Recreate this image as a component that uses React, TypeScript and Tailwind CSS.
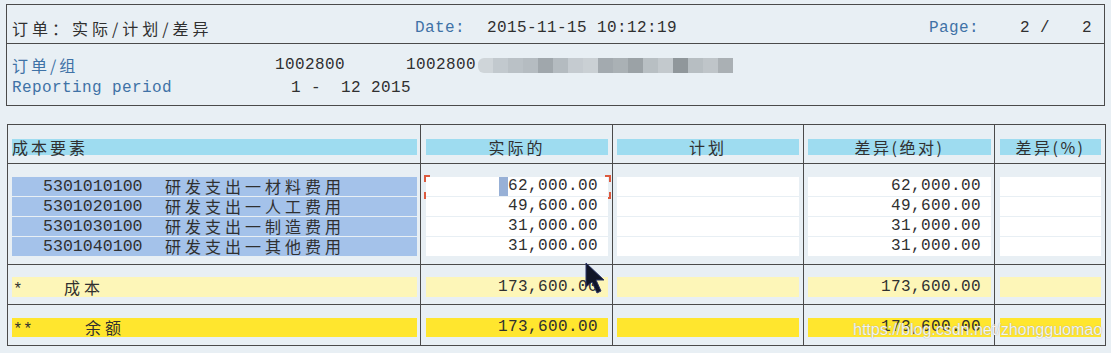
import React from "react";

const mono = "font-['Liberation_Mono','Noto_Sans_CJK_SC',monospace] tracking-[0.4px]";
const cjk = "font-['Noto_Sans_CJK_SC','Liberation_Sans',sans-serif]";

const cols = [
  "w-[413px] pl-[4px] pr-[3px] border-r border-[#4a4a4a]",
  "w-[192px] pl-[5px] pr-[4px] border-r border-[#4a4a4a]",
  "w-[191px] pl-[4px] pr-[4px] border-r border-[#4a4a4a]",
  "w-[191px] pl-[4px] pr-[3px] border-r border-[#4a4a4a]",
  "w-[110px] pl-[5px] pr-[4px]",
];

const blur = [
  "bg-[#cfd5d9]",
  "bg-[#c2c9ce]",
  "bg-[#bac1c6]",
  "bg-[#b5bcc1]",
  "bg-[#a0a7ac]",
  "bg-[#b4bbc0]",
  "bg-[#c5cbd0]",
  "bg-[#cad0d4]",
  "bg-[#a3aaaf]",
  "bg-[#aab1b5]",
  "bg-[#9ba2a6]",
  "bg-[#b8bfc3]",
  "bg-[#c3c9cd]",
  "bg-[#90979b]",
  "bg-[#b7bec2]",
  "bg-[#bfc5c9]",
  "bg-[#aab0b4]",
];

const rows = [
  { code: "5301010100", name: "研发支出一材料费用", val: "62,000.00" },
  { code: "5301020100", name: "研发支出一人工费用", val: "49,600.00" },
  { code: "5301030100", name: "研发支出一制造费用", val: "31,000.00" },
  { code: "5301040100", name: "研发支出一其他费用", val: "31,000.00" },
];

function Corner({ pos }: { pos: string }) {
  return <div className={`absolute w-[6px] h-[7px] border-[#dc5a3e] ${pos}`} />;
}

export default function App() {
  return (
    <div className="relative w-[1111px] h-[353px] overflow-hidden bg-[#e8eff4] pt-[4px] text-[#303030] text-[16px]">
      {/* top box */}
      <div className="ml-[6px] w-[1099px] border border-[#4a4a4a]">
        <div className="flex h-[39px] items-start pt-[13px] border-b border-[#4a4a4a] leading-[20px]">
          <span className={`w-[408px] pl-[5px] ${cjk} tracking-[4px]`}>订单：实际/计划/差异</span>
          <span className={`w-[72px] ${mono} text-[#3f72a6]`}>Date:</span>
          <span className={`w-[442px] ${mono}`}>2015-11-15 10:12:19</span>
          <span className={`w-[91px] ${mono} text-[#3f72a6]`}>Page:</span>
          <span className={`w-[62px] ${mono} whitespace-pre`}>2 /</span>
          <span className={`${mono}`}>2</span>
        </div>
        <div className="h-[61px] pt-[11px] leading-[20px]">
          <div className="flex items-center h-[20px]">
            <span className={`w-[268px] pl-[5px] ${cjk} tracking-[3px] text-[#3f72a6]`}>订单/组</span>
            <span className={`w-[131px] ${mono}`}>1002800</span>
            <span className={`w-[72px] ${mono}`}>1002800</span>
            <div className="flex h-[15px] rounded-l-[6px] overflow-hidden">
              {blur.map((c, i) => (
                <div key={i} className={`w-[15px] h-[15px] ${c}`} />
              ))}
            </div>
          </div>
          <div className="flex items-center h-[20px] mt-[3px]">
            <span className={`w-[284px] pl-[5px] ${mono} text-[#3f72a6]`}>Reporting period</span>
            <span className={`${mono} whitespace-pre`}>1 -  12 2015</span>
          </div>
        </div>
      </div>

      {/* bottom box */}
      <div className="mt-[18px] ml-[7px] w-[1099px] border border-[#4a4a4a]">
        {/* header */}
        <div className="flex h-[39px] border-b border-[#4a4a4a]">
          <div className={`${cols[0]} pt-[14px]`}>
            <div className={`h-[16px] bg-[#9edcf0] leading-[16px] ${cjk} tracking-[3px]`}>成本要素</div>
          </div>
          <div className={`${cols[1]} pt-[14px]`}>
            <div className={`h-[16px] bg-[#9edcf0] leading-[16px] text-center ${cjk} tracking-[3px]`}>实际的</div>
          </div>
          <div className={`${cols[2]} pt-[14px]`}>
            <div className={`h-[16px] bg-[#9edcf0] leading-[16px] text-center ${cjk} tracking-[3px]`}>计划</div>
          </div>
          <div className={`${cols[3]} pt-[14px]`}>
            <div className={`h-[16px] bg-[#9edcf0] leading-[16px] text-center ${cjk} tracking-[2.5px]`}>差异(绝对)</div>
          </div>
          <div className={`${cols[4]} pt-[14px]`}>
            <div className={`h-[16px] bg-[#9edcf0] leading-[16px] text-center ${cjk} tracking-[2.5px]`}>差异(%)</div>
          </div>
        </div>

        {/* data */}
        <div className="flex h-[101px] border-b border-[#4a4a4a]">
          <div className={`${cols[0]} pt-[13px] flex flex-col gap-[1px]`}>
            {rows.map((r) => (
              <div key={r.code} className="flex h-[19px] items-center bg-[#a4c2ea] leading-[19px]">
                <span className={`w-[153px] pl-[31px] ${mono} tracking-[0px] text-[16.6px]`}>{r.code}</span>
                <span className={`${cjk} tracking-[4px]`}>{r.name}</span>
              </div>
            ))}
          </div>
          <div className={`${cols[1]} pt-[13px] flex flex-col gap-[1px]`}>
            {rows.map((r, i) => (
              <div key={r.code} className="relative flex h-[19px] items-center justify-end bg-white pr-[10px] leading-[19px]">
                {i === 0 && <span className="inline-block w-[9px] h-[19px] bg-[#97b0d6]" />}
                <span className={mono}>{r.val}</span>
                {i === 0 && (
                  <>
                    <Corner pos="left-[-2px] top-[-2px] border-l-2 border-t-2" />
                    <Corner pos="left-[-2px] bottom-[-3px] border-l-2 border-b-2" />
                    <Corner pos="right-[-3px] top-[-2px] border-r-2 border-t-2" />
                    <Corner pos="right-[-3px] bottom-[-3px] border-r-2 border-b-2" />
                  </>
                )}
              </div>
            ))}
          </div>
          <div className={`${cols[2]} pt-[13px] flex flex-col gap-[1px]`}>
            {rows.map((r) => (
              <div key={r.code} className="h-[19px] bg-white" />
            ))}
          </div>
          <div className={`${cols[3]} pt-[13px] flex flex-col gap-[1px]`}>
            {rows.map((r) => (
              <div key={r.code} className="flex h-[19px] items-center justify-end bg-white pr-[10px] leading-[19px]">
                <span className={mono}>{r.val}</span>
              </div>
            ))}
          </div>
          <div className={`${cols[4]} pt-[13px] flex flex-col gap-[1px]`}>
            {rows.map((r) => (
              <div key={r.code} className="h-[19px] bg-white" />
            ))}
          </div>
        </div>

        {/* cost */}
        <div className="flex h-[40px] border-b border-[#4a4a4a]">
          <div className={`${cols[0]} pt-[12px]`}>
            <div className="flex h-[20px] items-center bg-[#fdf6b8] leading-[20px]">
              <span className={`w-[52px] pl-[1px] ${mono} translate-y-[3px]`}>*</span>
              <span className={`${cjk} tracking-[4px]`}>成本</span>
            </div>
          </div>
          <div className={`${cols[1]} pt-[12px]`}>
            <div className="flex h-[20px] items-center justify-end bg-[#fdf6b8] pr-[10px] leading-[20px]">
              <span className={mono}>173,600.00</span>
            </div>
          </div>
          <div className={`${cols[2]} pt-[12px]`}>
            <div className="h-[20px] bg-[#fdf6b8]" />
          </div>
          <div className={`${cols[3]} pt-[12px]`}>
            <div className="flex h-[20px] items-center justify-end bg-[#fdf6b8] pr-[10px] leading-[20px]">
              <span className={mono}>173,600.00</span>
            </div>
          </div>
          <div className={`${cols[4]} pt-[12px]`}>
            <div className="h-[20px] bg-[#fdf6b8]" />
          </div>
        </div>

        {/* total */}
        <div className="flex h-[40px]">
          <div className={`${cols[0]} pt-[13px]`}>
            <div className="flex h-[19px] items-center bg-[#ffe62e] leading-[19px]">
              <span className={`w-[73px] pl-[1px] ${mono} translate-y-[3px]`}>**</span>
              <span className={`${cjk} tracking-[4px]`}>余额</span>
            </div>
          </div>
          <div className={`${cols[1]} pt-[13px]`}>
            <div className="flex h-[19px] items-center justify-end bg-[#ffe62e] pr-[10px] leading-[19px]">
              <span className={mono}>173,600.00</span>
            </div>
          </div>
          <div className={`${cols[2]} pt-[13px]`}>
            <div className="h-[19px] bg-[#ffe62e]" />
          </div>
          <div className={`${cols[3]} pt-[13px]`}>
            <div className="flex h-[19px] items-center justify-end bg-[#ffe62e] pr-[10px] leading-[19px]">
              <span className={mono}>173,600.00</span>
            </div>
          </div>
          <div className={`${cols[4]} pt-[13px]`}>
            <div className="h-[19px] bg-[#ffe62e]" />
          </div>
        </div>
      </div>

      {/* mouse cursor */}
      <svg className="absolute left-[585px] top-[262px]" width="22" height="34" viewBox="0 0 22 34">
        <path d="M1 1 L1 25 L7 20 L12 31 L16 29 L11 18 L19 18 Z" fill="#111628" stroke="#2b3566" strokeWidth="1" />
      </svg>

      {/* watermark */}
      <div className="absolute left-[853px] top-[320px] font-['Liberation_Sans',sans-serif] text-[16px] leading-[20px] text-white/90 [text-shadow:0_0_1px_#8a8a8a]">
        https://blog.csdn.net/zhongguomao
      </div>
    </div>
  );
}
